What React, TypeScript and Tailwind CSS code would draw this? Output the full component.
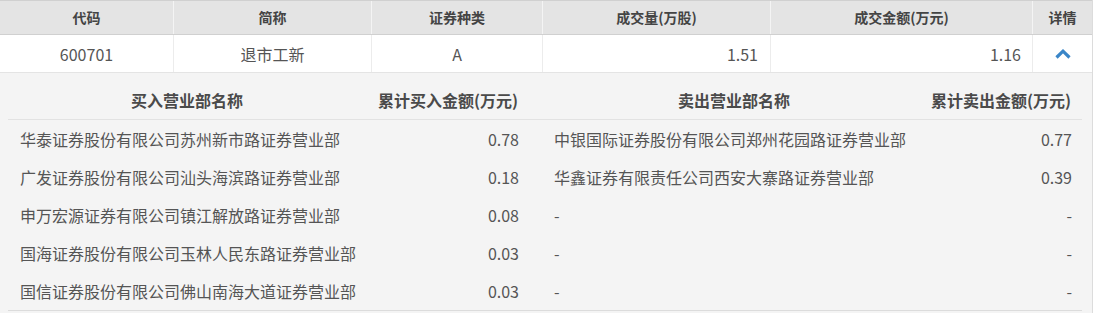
const buys = [
  { name: '华泰证券股份有限公司苏州新市路证券营业部', amount: '0.78' },
  { name: '广发证券股份有限公司汕头海滨路证券营业部', amount: '0.18' },
  { name: '申万宏源证券有限公司镇江解放路证券营业部', amount: '0.08' },
  { name: '国海证券股份有限公司玉林人民东路证券营业部', amount: '0.03' },
  { name: '国信证券股份有限公司佛山南海大道证券营业部', amount: '0.03' },
];

const sells = [
  { name: '中银国际证券股份有限公司郑州花园路证券营业部', amount: '0.77' },
  { name: '华鑫证券有限责任公司西安大寨路证券营业部', amount: '0.39' },
  { name: '-', amount: '-' },
  { name: '-', amount: '-' },
  { name: '-', amount: '-' },
];

const ChevronUp = () => (
  <svg width="16" height="10" viewBox="0 0 16 10">
    <polyline points="1.5,8.5 8,2.2 14.5,8.5" fill="none" stroke="#3a86c8" strokeWidth="3.2" />
  </svg>
);

export default function App() {
  return (
    <div
      className="w-[1093px] bg-white text-[#555]"
      style={{ fontFamily: '"Noto Sans CJK SC", "Liberation Sans", sans-serif' }}
    >
      <div className="border-r border-[#dcdcdc]">
        {/* main header */}
        <div className="flex h-[35px] items-center bg-[#e4e4e4] border-t border-b border-[#d0d0d0] text-[14px] font-bold text-[#444]">
          <div className="w-[174px] h-full flex items-center justify-center border-r border-[#f4f4f4]">代码</div>
          <div className="w-[198px] h-full flex items-center justify-center border-r border-[#f4f4f4]">简称</div>
          <div className="w-[171px] h-full flex items-center justify-center border-r border-[#f4f4f4]">证券种类</div>
          <div className="w-[228px] h-full flex items-center justify-center border-r border-[#f4f4f4]">成交量(万股)</div>
          <div className="w-[262px] h-full flex items-center justify-center border-r border-[#f4f4f4]">成交金额(万元)</div>
          <div className="flex-1 h-full flex items-center justify-center">详情</div>
        </div>

        {/* data row */}
        <div className="flex h-[38px] items-center border-b border-[#e4e4e4] text-[16px]">
          <div className="w-[174px] h-full flex items-center justify-center border-r border-[#ececec]">600701</div>
          <div className="w-[198px] h-full flex items-center justify-center border-r border-[#ececec]">退市工新</div>
          <div className="w-[171px] h-full flex items-center justify-center border-r border-[#ececec]">A</div>
          <div className="w-[228px] h-full flex items-center justify-end pr-[12px] border-r border-[#ececec]">1.51</div>
          <div className="w-[262px] h-full flex items-center justify-end pr-[11px] border-r border-[#ececec]">1.16</div>
          <div className="flex-1 h-full flex items-center justify-center">
            <ChevronUp />
          </div>
        </div>

        {/* detail */}
        <div className="bg-[#f4f4f4] pl-[8px] pr-[10px] pt-[8px] pb-[2px]">
          <div className="flex h-[39px] items-center border-b border-[#e2e2e2] text-[16px] font-bold text-[#4a4a4a] whitespace-nowrap">
            <div className="w-[358px] text-center">买入营业部名称</div>
            <div className="w-[163px] flex justify-end pr-[11px]">累计买入金额(万元)</div>
            <div className="w-[410px] text-center">卖出营业部名称</div>
            <div className="w-[143px] flex justify-end pr-[11px]">
              <span className="shrink-0">累计卖出金额(万元)</span>
            </div>
          </div>
          <div className="border-b border-[#dcdcdc]">
            {buys.map((b, i) => (
              <div key={i} className="flex h-[38px] items-center text-[16px]">
                <div className="w-[358px] pl-[12px] whitespace-nowrap">{b.name}</div>
                <div className="w-[163px] text-right pr-[10px]">{b.amount}</div>
                <div className="w-[410px] pl-[25px] whitespace-nowrap">{sells[i].name}</div>
                <div className="w-[143px] text-right pr-[10px]">{sells[i].amount}</div>
              </div>
            ))}
          </div>
        </div>
      </div>
    </div>
  );
}
